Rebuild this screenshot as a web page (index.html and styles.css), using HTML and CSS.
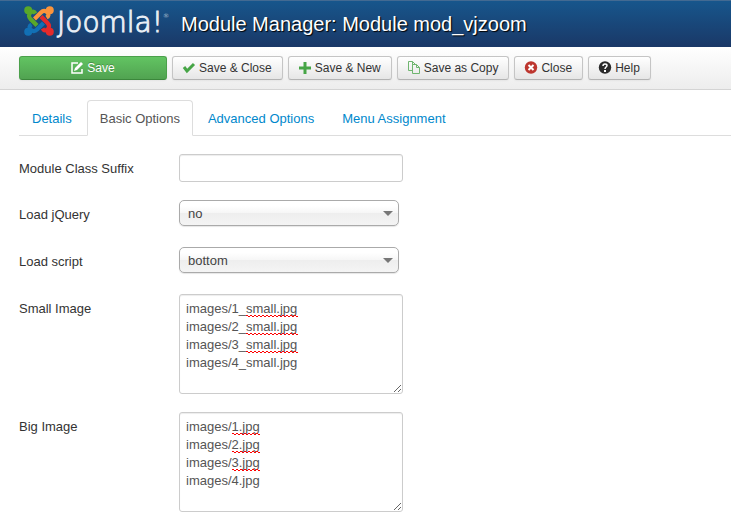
FILE: index.html
```html
<!DOCTYPE html>
<html lang="en">
<head>
<meta charset="UTF-8">
<meta name="viewport" content="width=device-width, initial-scale=1.0">
<title>Module Manager: Module mod_vjzoom</title>
<link rel="stylesheet" href="styles.css">
</head>
<body>
<header class="header">
  <a class="logo" href="#" aria-label="Joomla!">
    <svg class="logo-mark" viewBox="0 0 30 30">
      <defs>
        <g id="arm">
          <path d="M19.500 17L13 23.500C11 25.500 8.500 25.500 6.800 23.800C5 22 5 20 7.500 18.500" fill="none" stroke-width="4.200"/>
          <circle cx="4.200" cy="25.800" r="2.200" stroke-width="3.600"/>
        </g>
      </defs>
      <use href="#arm" stroke="#1270b5" fill="#1270b5"/>
      <use href="#arm" stroke="#59a829" fill="#59a829" transform="rotate(90 15 15)"/>
      <use href="#arm" stroke="#fb943b" fill="#fb943b" transform="rotate(180 15 15)"/>
      <use href="#arm" stroke="#e52a2b" fill="#e52a2b" transform="rotate(270 15 15)"/>
    </svg>
    <span class="logo-text">Joomla!<sup>®</sup></span>
  </a>
  <h1 class="page-title">Module Manager: Module mod_vjzoom</h1>
</header>

<div class="toolbar">
  <button type="button" class="btn btn-success"><svg class="icon" viewBox="0 0 14 14"><path d="M8 2H2v10h10V8" fill="none" stroke="#fff" stroke-width="1.500"/><path d="M4 10l1-3 6-6 2 2-6 6z" fill="#fff"/></svg>Save</button>
  <button type="button" class="btn"><svg class="icon" viewBox="0 0 14 14"><path d="M2 6l3 4 7-7" fill="none" stroke="#46a546" stroke-width="3"/></svg>Save &amp; Close</button>
  <button type="button" class="btn"><svg class="icon" viewBox="0 0 14 14"><path d="M7 1v12M1 7h12" stroke="#46a546" stroke-width="3"/></svg>Save &amp; New</button>
  <button type="button" class="btn"><svg class="icon" viewBox="0 0 14 14"><path d="M5.500 9.500h-4v-9h4l3 3M5.500 .5v3h3M5.500 3.500h4l3 3v6h-7zM9.500 3.500v3h3" fill="none" stroke="#6fb56f"/></svg>Save as Copy</button>
  <button type="button" class="btn"><svg class="icon" viewBox="0 0 14 14"><circle cx="7" cy="6.500" r="6.200" fill="#bd362f"/><path d="M4.500 4l5 5M9.500 4l-5 5" stroke="#fff" stroke-width="2"/></svg>Close</button>
  <button type="button" class="btn"><svg class="icon" viewBox="0 0 14 14"><circle cx="7" cy="6.500" r="6.200" fill="#2b2b2b"/><path d="M5 5c0-3 4-2.500 4-.5C9 6 7 6 7 8" fill="none" stroke="#fff" stroke-width="1.500"/><path d="M7 9v2" stroke="#fff" stroke-width="2"/></svg>Help</button>
</div>

<main class="content">
  <nav class="tabs">
    <a href="#details">Details</a>
    <a href="#options" class="active">Basic Options</a>
    <a href="#advanced">Advanced Options</a>
    <a href="#assignment">Menu Assignment</a>
  </nav>

  <form class="form" id="options">
    <div class="control-group">
      <label for="suffix">Module Class Suffix</label>
      <input type="text" id="suffix" class="field">
    </div>
    <div class="control-group">
      <label for="jquery">Load jQuery</label>
      <div class="select-wrap">
        <select id="jquery"><option>yes</option><option selected>no</option></select>
      </div>
    </div>
    <div class="control-group">
      <label for="script">Load script</label>
      <div class="select-wrap">
        <select id="script"><option>top</option><option selected>bottom</option></select>
      </div>
    </div>
    <div class="control-group">
      <label for="small">Small Image</label>
      <div class="area-wrap">
        <textarea id="small" class="field" spellcheck="false">images/1_small.jpg
images/2_small.jpg
images/3_small.jpg
images/4_small.jpg</textarea>
        <div class="marks marks-small"><i></i><i></i><i></i></div>
      </div>
    </div>
    <div class="control-group">
      <label for="big">Big Image</label>
      <div class="area-wrap">
        <textarea id="big" class="field" spellcheck="false">images/1.jpg
images/2.jpg
images/3.jpg
images/4.jpg</textarea>
        <div class="marks marks-big"><i></i><i></i><i></i></div>
      </div>
    </div>
  </form>
</main>
</body>
</html>
```
FILE: styles.css
```css
* { box-sizing: border-box; }
body { margin: 0; background: #fff; color: #333; font: 13px/18px "Liberation Sans", Arial, sans-serif; }
button, input, select, textarea { font: inherit; }

.header { display: flex; align-items: center; gap: 12px; height: 47px; padding: 0 24px; border-top: 1px solid #436a92; background: linear-gradient(#17568c, #1a3867); }
.logo { display: flex; align-items: flex-start; gap: 3px; height: 36px; color: #e8eef5; text-decoration: none; }
.logo-mark { width: 30px; height: 30px; }
.logo-text { font: 200 28px/34px "DejaVu Sans Light", "DejaVu Sans", sans-serif; -webkit-text-stroke: 1px #e8eef5; }
.logo-text sup { font-size: 6px; line-height: 6px; vertical-align: 14px; -webkit-text-stroke: 0; }
.page-title { margin: 0; color: #fff; font-size: 20px; font-weight: normal; line-height: 36px; text-shadow: 1px 1px 1px #000; }

.toolbar { display: flex; flex-wrap: wrap; gap: 5px; padding: 9px 19px; border-bottom: 1px solid #d4d4d4; background: linear-gradient(#fff, #ededed); }
.btn { display: flex; align-items: center; justify-content: center; gap: 3px; height: 24px; padding: 0 10px 0 9px; border: 1px solid #c5c5c5; border-bottom-color: #b3b3b3; border-radius: 3px; background: linear-gradient(#fff, #e6e6e6); color: #333; font-size: 12px; box-shadow: 0 1px 2px rgba(0, 0, 0, .05); cursor: pointer; }
.btn-success { width: 148px; border-color: #4ba04b #4ba04b #3b873b; background: linear-gradient(#62c462, #51a351); color: #fff; text-shadow: 0 -1px 0 rgba(0, 0, 0, .25); }
.icon { width: 14px; height: 14px; }

.content { padding: 10px 0 0 19px; }
.tabs { display: flex; gap: 2px; border-bottom: 1px solid #ddd; }
.tabs a { margin-bottom: -1px; padding: 9px 12px 7px; border: 1px solid transparent; border-radius: 4px 4px 0 0; color: #08c; text-decoration: none; }
.tabs .active { border-color: #ddd #ddd #fff; color: #555; }

.form { display: flex; flex-direction: column; gap: 18px; padding-top: 18px; }
.control-group { display: flex; align-items: flex-start; }
.control-group label { width: 160px; padding-top: 6px; }
.field { display: block; width: 224px; height: 28px; margin: 0; padding: 4px 6px; border: 1px solid #ccc; border-radius: 3px; color: #555; background: #fff; box-shadow: inset 0 1px 1px rgba(0, 0, 0, .075); }
textarea.field { height: 100px; padding: 5px 6px; resize: both; }
.select-wrap { position: relative; width: 220px; height: 29px; }
.select-wrap::after { content: ""; position: absolute; top: 11px; right: 6px; border: 5px solid transparent; border-top-color: #777; border-bottom: 0; pointer-events: none; }
select { display: block; width: 100%; height: 26px; padding: 2px 8px 0; border: 1px solid #aaa; border-radius: 5px; background: linear-gradient(#fff 20%, #f6f6f6 50%, #eee 52%, #f4f4f4 100%); color: #444; appearance: none; box-shadow: 0 1px 1px rgba(0, 0, 0, .1); }

/* spelling marks under the file names */
.area-wrap { position: relative; }
.marks { position: absolute; top: 21px; display: flex; flex-direction: column; gap: 16px; pointer-events: none; }
.marks i { height: 2px; background: linear-gradient(90deg, #f00 50%, transparent 50%) 0 0 / 4px 1px repeat-x, linear-gradient(90deg, transparent 50%, #f00 50%) 0 1px / 4px 1px repeat-x; }
.marks-small { left: 67px; width: 52px; }
.marks-big { left: 53px; width: 28px; }
```
